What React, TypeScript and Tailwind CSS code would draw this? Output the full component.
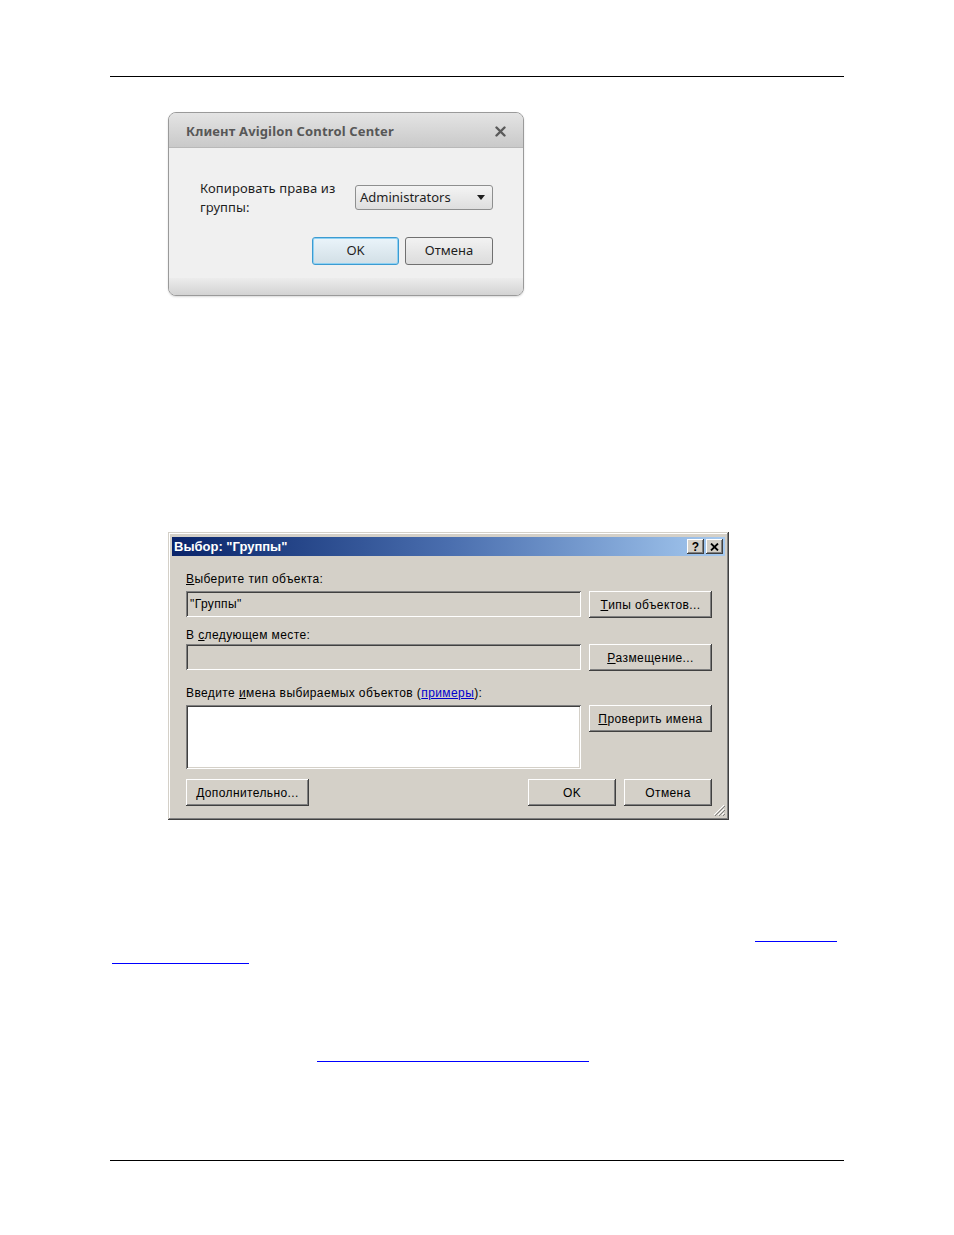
import React from 'react';

const raised =
  'shadow-[inset_-1px_-1px_0_#404040,inset_1px_1px_0_#ffffff,inset_-2px_-2px_0_#808080,inset_2px_2px_0_#d4d0c8]';
const sunken =
  'shadow-[inset_1px_1px_0_#808080,inset_-1px_-1px_0_#ffffff,inset_2px_2px_0_#404040,inset_-2px_-2px_0_#d4d0c8]';

function CopyRightsDialog() {
  return (
    <div className="w-[356px] h-[184px] rounded-[8px] border border-[#9a9a9a] overflow-hidden flex flex-col bg-[#f0f0f0] font-['Noto_Sans',sans-serif] shadow-[0_1px_2px_rgba(0,0,0,0.15)]">
      <div className="h-[35px] shrink-0 flex items-center justify-between pl-[17px] pr-[17px] pt-[3px] bg-gradient-to-b from-[#e4e4e4] to-[#c9c9c9] border-b border-[#b8b8b8]">
        <span className="text-[13px] font-bold text-[#575757] tracking-[0.15px]">Клиент Avigilon Control Center</span>
        <svg width="11" height="11" viewBox="0 0 11 11">
          <path d="M1.5 1.5L9.5 9.5M9.5 1.5L1.5 9.5" stroke="#5a5a5a" strokeWidth="2.4" strokeLinecap="round" />
        </svg>
      </div>
      <div className="flex-1 flex flex-col pl-[31px] pr-[30px] pt-[31px]">
        <div className="flex items-start justify-between">
          <div className="text-[13px] leading-[19px] text-[#1e1e1e] w-[150px] tracking-[0.1px]">
            Копировать права из
            <br />
            группы:
          </div>
          <div className="mt-[6px] w-[138px] h-[25px] rounded-[3px] border border-[#8e8f8f] bg-gradient-to-b from-[#f4f4f4] to-[#dedede] flex items-center justify-between pl-[4px] pr-[7px]">
            <span className="text-[13px] text-[#1e1e1e]">Administrators</span>
            <svg width="8" height="5" viewBox="0 0 8 5">
              <path d="M0 0H8L4 5Z" fill="#1e1e1e" />
            </svg>
          </div>
        </div>
        <div className="flex justify-end gap-[6px] mt-[20px]">
          <div className="w-[87px] h-[28px] rounded-[3px] border border-[#3c9bd1] bg-gradient-to-b from-[#eaf4fa] to-[#d2dfe6] flex items-center justify-center text-[13px] text-[#1e1e1e] shadow-[inset_0_0_0_1px_#8fd1f3]">
            OK
          </div>
          <div className="w-[88px] h-[28px] rounded-[3px] border border-[#707070] bg-gradient-to-b from-[#f2f2f2] to-[#dcdcdc] flex items-center justify-center text-[13px] text-[#1e1e1e]">
            Отмена
          </div>
        </div>
      </div>
      <div className="h-[17px] shrink-0 bg-gradient-to-b from-[#ececec] to-[#d3d3d3]" />
    </div>
  );
}

function ClassicButton({ children, w }: { children: React.ReactNode; w: string }) {
  return (
    <div className={`${w} h-[27px] bg-[#d4d0c8] ${raised} flex items-center justify-center text-[12px] tracking-[0.4px] text-black`}>
      {children}
    </div>
  );
}

function SelectGroupsDialog() {
  return (
    <div className="w-[561px] h-[288px] bg-[#d4d0c8] p-[4px] pt-[5px] font-['Liberation_Sans',sans-serif] shadow-[inset_-1px_-1px_0_#404040,inset_1px_1px_0_#d4d0c8,inset_-2px_-2px_0_#808080,inset_2px_2px_0_#ffffff] flex flex-col">
      <div className="h-[19px] shrink-0 bg-gradient-to-r from-[#0a246a] via-[#4a6eae] to-[#a6caf0] flex items-center justify-between pl-[2px] pr-[2px]">
        <span className="text-[13px] font-bold text-white">Выбор: "Группы"</span>
        <div className="flex gap-[2px]">
          <div className={`w-[17px] h-[15px] bg-[#d4d0c8] ${raised} flex items-center justify-center text-[12px] font-bold text-black leading-none`}>?</div>
          <div className={`w-[17px] h-[15px] bg-[#d4d0c8] ${raised} flex items-center justify-center`}>
            <svg width="9" height="8" viewBox="0 0 9 8">
              <path d="M1 0.5L8 7.5M8 0.5L1 7.5" stroke="#000" strokeWidth="1.8" />
            </svg>
          </div>
        </div>
      </div>
      <div className="flex-1 relative pl-[14px] pr-[13px] pt-[15px] text-[12px] tracking-[0.4px] text-black">
        <div className="leading-[16px]"><u>В</u>ыберите тип объекта:</div>
        <div className="flex gap-[8px] mt-[4px]">
          <div className={`w-[395px] h-[26px] bg-[#d4d0c8] ${sunken} pl-[4px] pt-[4px]`}>"Группы"</div>
          <ClassicButton w="w-[123px]"><u>Т</u>ипы объектов...</ClassicButton>
        </div>
        <div className="leading-[16px] mt-[9px]">В <u>с</u>ледующем месте:</div>
        <div className="flex gap-[8px] mt-[1px]">
          <div className={`w-[395px] h-[26px] bg-[#d4d0c8] ${sunken}`} />
          <ClassicButton w="w-[123px]"><u>Р</u>азмещение...</ClassicButton>
        </div>
        <div className="leading-[16px] mt-[14px]">
          Введите <u>и</u>мена выбираемых объектов (<span className="text-[#0000cc] underline">примеры</span>):
        </div>
        <div className="flex gap-[8px] mt-[4px]">
          <div className={`w-[395px] h-[64px] bg-white ${sunken}`} />
          <ClassicButton w="w-[123px]"><u>П</u>роверить имена</ClassicButton>
        </div>
        <div className="flex mt-[10px] gap-[8px]">
          <ClassicButton w="w-[123px]"><u>Д</u>ополнительно...</ClassicButton>
          <div className="flex-1" />
          <ClassicButton w="w-[88px]">OK</ClassicButton>
          <ClassicButton w="w-[88px]">Отмена</ClassicButton>
        </div>
        <svg width="12" height="12" viewBox="0 0 12 12" className="absolute right-[0px] bottom-[0px]">
          <path d="M11 1L1 11M11 5L5 11M11 9L9 11" stroke="#ffffff" strokeWidth="1" />
          <path d="M12 2L2 12M12 6L6 12M12 10L10 12" stroke="#808080" strokeWidth="1" />
        </svg>
      </div>
    </div>
  );
}

export default function App() {
  return (
    <div className="w-[954px] h-[1235px] bg-white">
      <div className="ml-[110px] w-[734px] pt-[76px]">
        <div className="h-[1px] bg-black" />
        <div className="ml-[58px] mt-[35px]">
          <CopyRightsDialog />
        </div>
        <div className="ml-[58px] mt-[236px]">
          <SelectGroupsDialog />
        </div>
        <div className="mt-[121px] ml-[645px] w-[82px] h-[1px] bg-[#0000ff]" />
        <div className="mt-[21px] ml-[2px] w-[137px] h-[1px] bg-[#0000ff]" />
        <div className="mt-[97px] ml-[207px] w-[272px] h-[1px] bg-[#0000ff]" />
        <div className="mt-[98px] h-[1px] bg-black" />
      </div>
    </div>
  );
}
